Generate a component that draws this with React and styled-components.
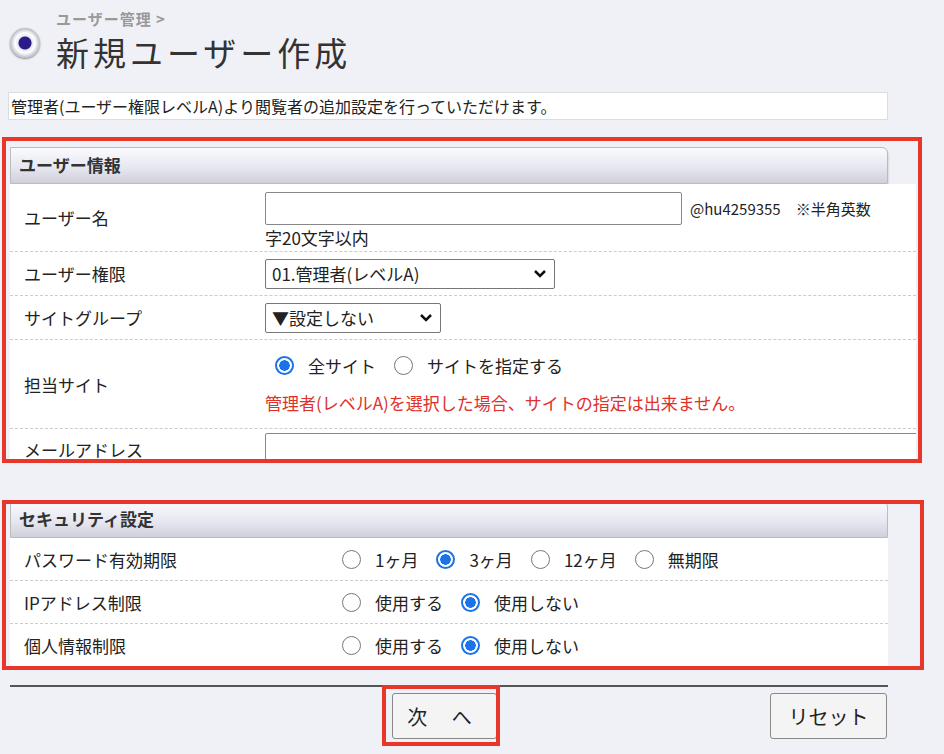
import React from "react";
import styled, { createGlobalStyle } from "styled-components";

const G = createGlobalStyle`
  body{margin:0;background:#f0f1f6;font-family:"Noto Sans CJK JP","Noto Sans",sans-serif;color:#222;}
`;
const Page = styled.div`width:944px;height:754px;overflow:hidden;position:relative;`;
const Head = styled.div`display:flex;align-items:flex-end;gap:16px;padding:10px 0 0 10px;height:74px;box-sizing:border-box;`;
const Ball = styled.div`width:30px;height:30px;border-radius:50%;margin-bottom:16px;flex:none;
  background:radial-gradient(circle at 50% 50%,#2a1a8a 0 6px,#e6e6ee 7px,#fff 10px,#b8b8c4 15px);box-shadow:0 1px 2px #888;`;
const Titles = styled.div`display:flex;flex-direction:column;`;
const Crumb = styled.div`font-size:15px;color:#999;font-weight:bold;line-height:18px;letter-spacing:1px;margin-bottom:2px;`;
const Title = styled.div`font-size:33px;color:#333;line-height:44px;letter-spacing:4px;`;
const Desc = styled.div`margin:18px 56px 0 8px;background:#fff;border:1px solid #ddd;height:28px;font-size:16px;line-height:26px;padding-left:2px;box-sizing:border-box;`;
const Annot = styled.div`position:absolute;left:2px;top:${p=>p.top}px;width:${p=>p.w}px;height:${p=>p.h}px;border:4px solid #e8362a;box-sizing:border-box;pointer-events:none;`;
const Panel = styled.div`margin:${p=>p.m};width:906px;height:${p=>p.h}px;overflow:hidden;`;
const PHead = styled.div`width:878px;height:37px;box-sizing:border-box;border:1px solid #bbb;border-radius:0 6px 0 0;
  background:linear-gradient(#fbfbfe,#e4e5ef 60%,#cfd0da);box-shadow:0 2px 2px #aaa;font-weight:bold;font-size:17px;line-height:34px;padding-left:8px;color:#333;`;
const Row = styled.div`display:grid;grid-template-columns:${p=>p.c}px 1fr;align-items:center;background:#fff;min-height:${p=>p.h}px;border-bottom:1px dashed #ccc;font-size:17px;`;
const Lab = styled.div`padding-left:14px;`;
const Val = styled.div`display:flex;flex-wrap:wrap;align-items:center;gap:0 4px;`;
const Input = styled.div`width:${p=>p.w}px;height:33px;border:1px solid #888;border-radius:2px;background:#fff;box-sizing:border-box;`;
const Sel = styled.div`display:flex;align-items:center;justify-content:space-between;width:${p=>p.w}px;height:30px;border:1px solid #777;border-radius:2px;padding:0 6px;box-sizing:border-box;font-size:17px;background:#fff;`;
const Radio = styled.span`display:inline-block;width:19px;height:19px;border-radius:50%;box-sizing:border-box;margin:0 10px 0 ${p=>p.first?2:14}px;
  border:${p=>p.on?"2px solid #1a73e8":"1px solid #777"};background:${p=>p.on?"radial-gradient(#1a73e8 0 5px,#fff 5.5px)":"#fff"};`;
const Red = styled.div`color:#e0302a;width:100%;margin-top:12px;`;
const Line = styled.div`position:absolute;left:10px;top:685px;width:878px;border-top:2px solid #555;`;
const Btn = styled.div`position:absolute;left:${p=>p.x}px;top:693px;width:${p=>p.w}px;height:44px;border:1px solid #888;border-radius:3px;background:#f4f4f4;font-size:20px;display:flex;align-items:center;justify-content:center;letter-spacing:${p=>p.ls||0}px;`;
const Chev = () => <svg width="16" height="10" viewBox="0 0 16 10"><path d="M3 2l5 5 5-5" fill="none" stroke="#111" strokeWidth="2.5"/></svg>;

const R = ({opts,on}) => opts.map((o,i)=>(<React.Fragment key={o}><Radio first={i===0} on={i===on}/><span>{o}</span></React.Fragment>));

export default function App(){
  return <Page><G/>
    <Head><Ball/><Titles><Crumb>ユーザー管理 &gt;</Crumb><Title>新規ユーザー作成</Title></Titles></Head>
    <Desc>管理者(ユーザー権限レベルA)より閲覧者の追加設定を行っていただけます。</Desc>
    <Panel m="27px 0 0 10px" h={316}>
      <PHead>ユーザー情報</PHead>
      <Row c={255} h={67}><Lab>ユーザー名</Lab><Val style={{paddingTop:6}}><Input w={417}/><span style={{fontSize:15,marginLeft:4}}>@hu4259355　※半角英数</span><span style={{width:"100%"}}>字20文字以内</span></Val></Row>
      <Row c={255} h={43}><Lab>ユーザー権限</Lab><Val><Sel w={290}>01.管理者(レベルA)<Chev/></Sel></Val></Row>
      <Row c={255} h={43}><Lab>サイトグループ</Lab><Val><Sel w={176}>▼設定しない<Chev/></Sel></Val></Row>
      <Row c={255} h={88}><Lab>担当サイト</Lab><Val style={{paddingLeft:8}}><R opts={["全サイト","サイトを指定する"]} on={0}/><Red style={{marginLeft:-8}}>管理者(レベルA)を選択した場合、サイトの指定は出来ません。</Red></Val></Row>
      <Row c={255} h={40}><Lab>メールアドレス</Lab><Val><Input w={660}/></Val></Row>
    </Panel>
    <Panel m="38px 0 0 10px" h={168} style={{width:878}}>
      <PHead>セキュリティ設定</PHead>
      <Row c={330} h={42}><Lab>パスワード有効期限</Lab><Val><R opts={["1ヶ月","3ヶ月","12ヶ月","無期限"]} on={1}/></Val></Row>
      <Row c={330} h={42}><Lab>IPアドレス制限</Lab><Val><R opts={["使用する","使用しない"]} on={1}/></Val></Row>
      <Row c={330} h={42}><Lab>個人情報制限</Lab><Val><R opts={["使用する","使用しない"]} on={1}/></Val></Row>
    </Panel>
    <Annot top={137} w={920} h={326}/>
    <Annot top={500} w={922} h={170}/>
    <Line/>
    <Btn x={392} w={103} ls={10}>次 へ</Btn>
    <Btn x={770} w={115}>リセット</Btn>
    <Annot top={685} w={118} h={61} style={{left:382}}/>
  </Page>;
}
